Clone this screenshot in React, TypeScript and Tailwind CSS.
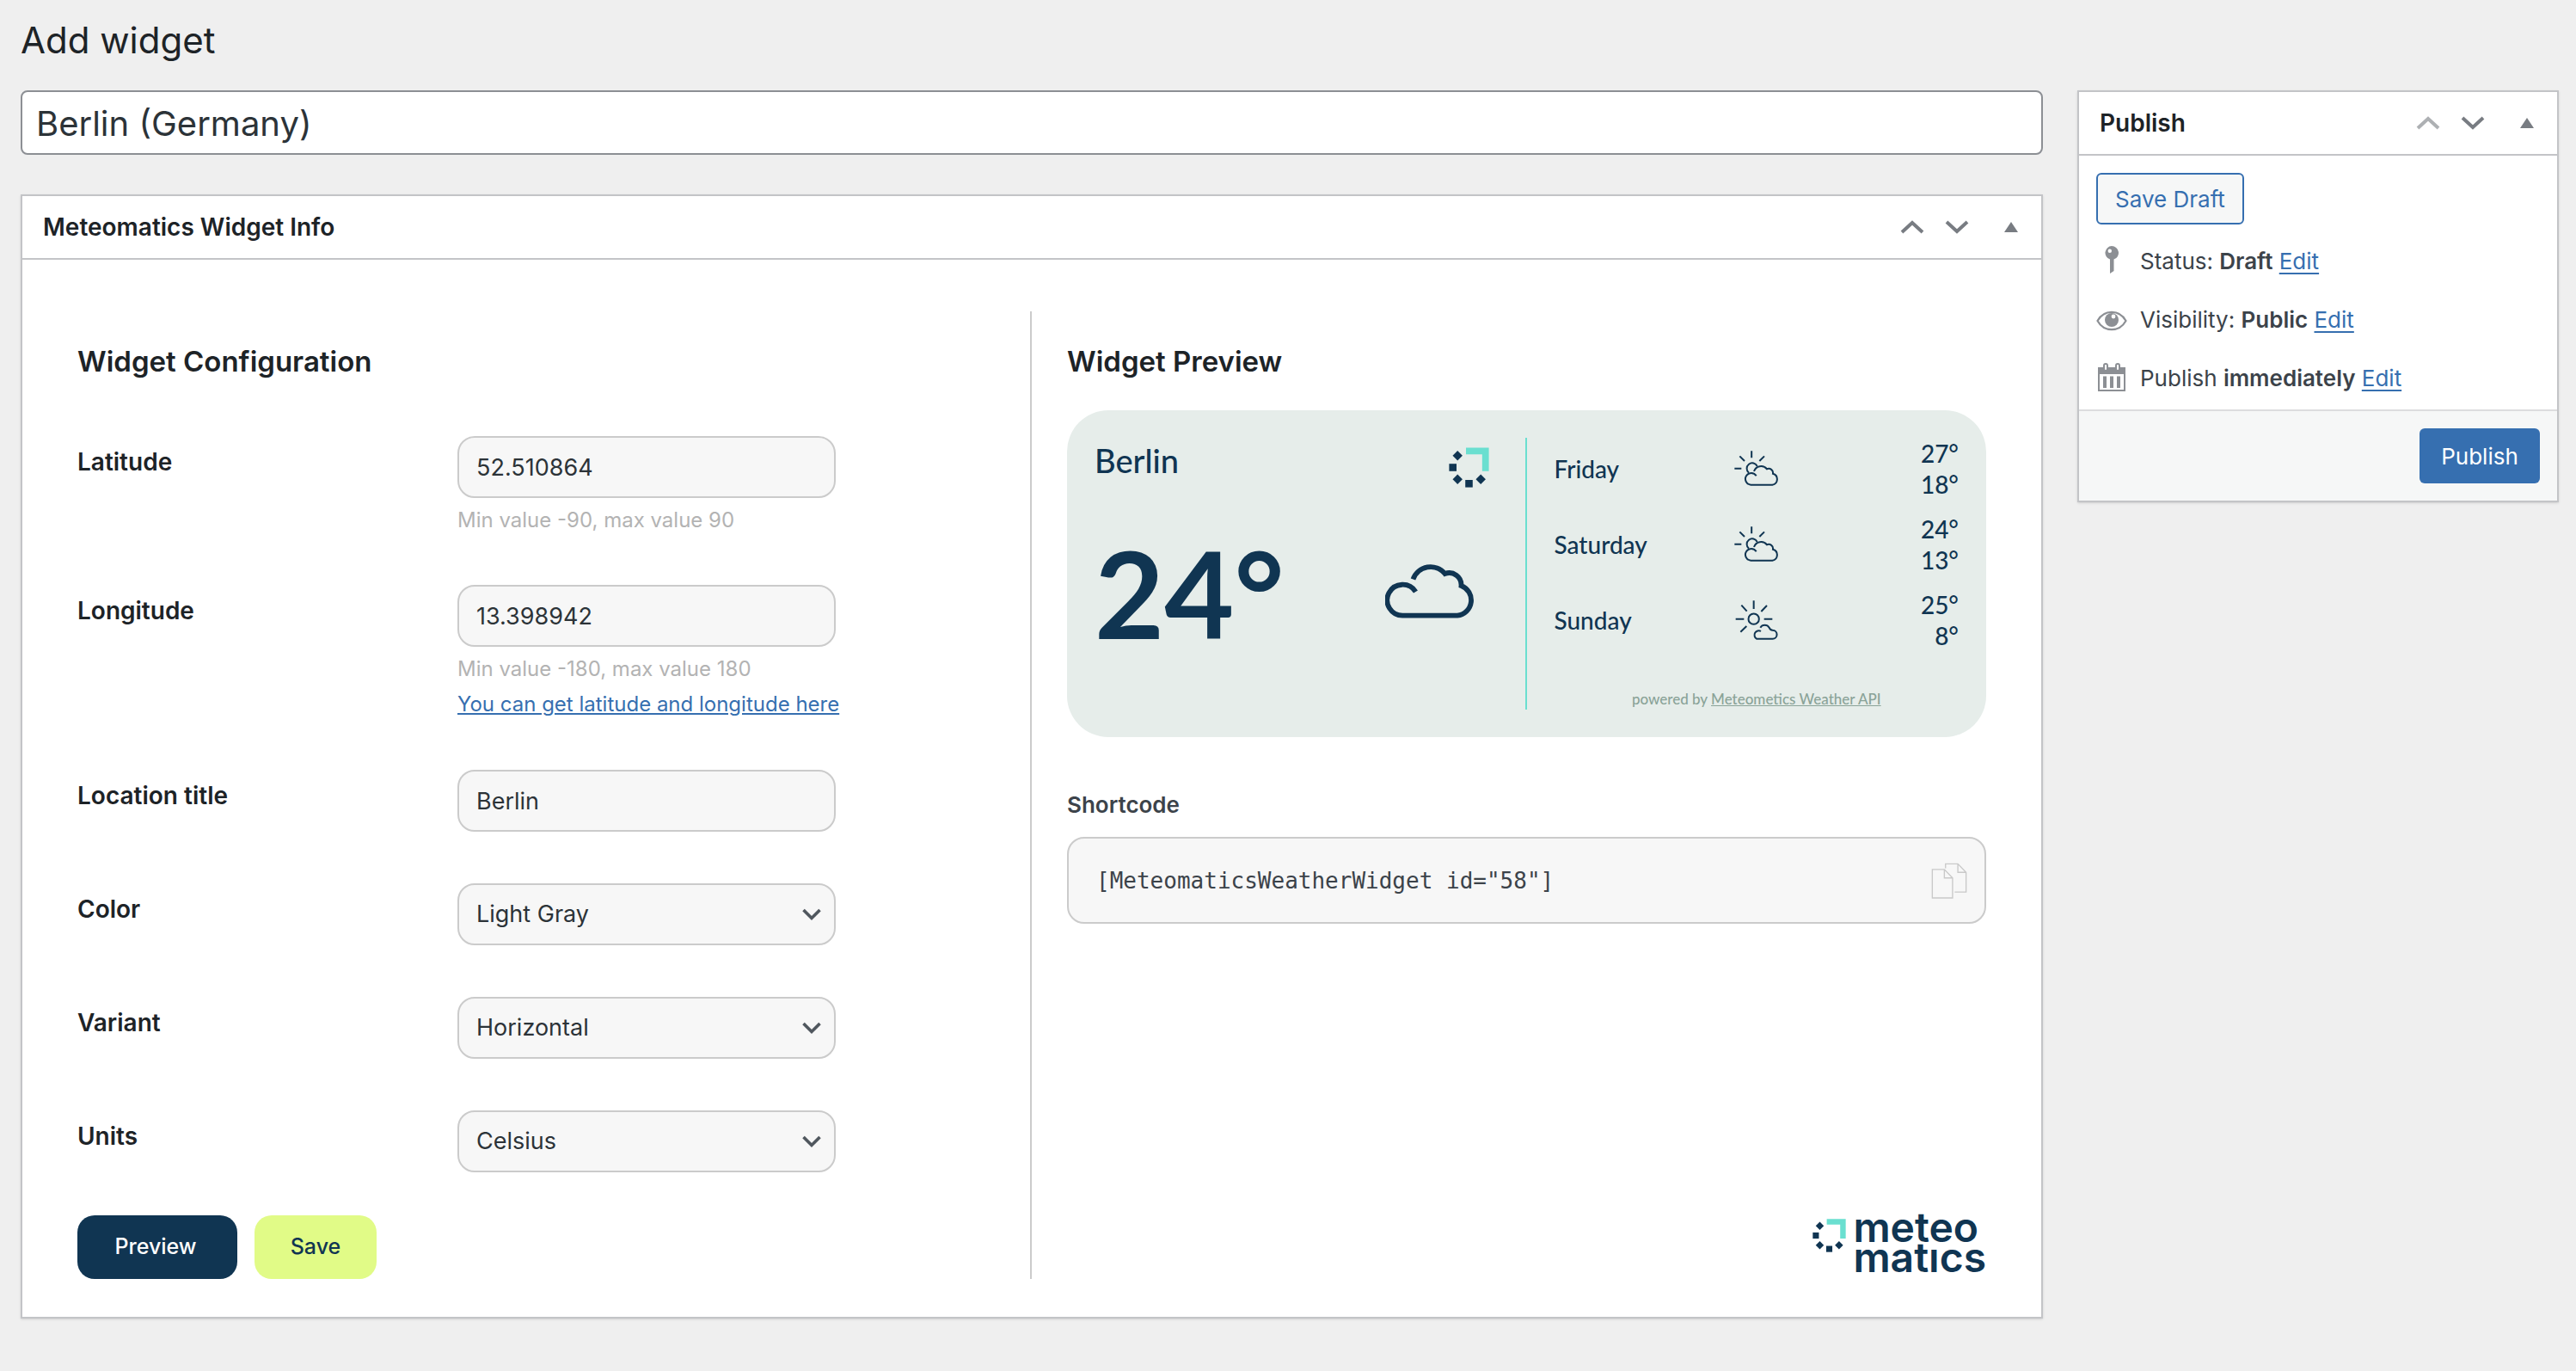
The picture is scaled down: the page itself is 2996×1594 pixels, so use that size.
import React, { useState } from "react";

function MoveUpIcon() {
  return (
    <svg width="28" height="16" viewBox="0 0 28 16" aria-hidden="true">
      <path d="M2 14 L14 3 L26 14" fill="none" stroke="currentColor" strokeWidth="4" />
    </svg>
  );
}

function MoveDownIcon() {
  return (
    <svg width="28" height="16" viewBox="0 0 28 16" aria-hidden="true">
      <path d="M2 2 L14 13 L26 2" fill="none" stroke="currentColor" strokeWidth="4" />
    </svg>
  );
}

function ToggleIcon() {
  return (
    <svg width="16" height="12" viewBox="0 0 16 12" aria-hidden="true">
      <path d="M8 0 L16 12 H0 Z" fill="currentColor" />
    </svg>
  );
}

function PanelHeader({ title, isFirst = false }: { title: string; isFirst?: boolean }) {
  return (
    <header className="flex h-[74px] items-center border-b-2 border-[#c3c4c7] pr-[27px] pl-6 text-[#787c82]">
      <h2 className="mr-auto text-[28px] leading-9 font-semibold text-[#1d2327]">{title}</h2>
      <button type="button" aria-label="Move up" className={isFirst ? "opacity-60" : ""}>
        <MoveUpIcon />
      </button>
      <button type="button" aria-label="Move down" className="ml-6">
        <MoveDownIcon />
      </button>
      <button type="button" aria-label="Toggle panel" className="ml-[41px]">
        <ToggleIcon />
      </button>
    </header>
  );
}

function MeteomaticsMark({ className }: { className: string }) {
  return (
    <svg viewBox="179 109 115 115" className={className} aria-hidden="true">
      <path d="M228 110 H293 V177 H274 V129 H228 Z" fill="#6adfd0" />
      <g fill="#103552">
        <path d="M204 119 L218 133 L204 147 L190 133 Z" />
        <path d="M204 186 L218 200 L204 214 L190 200 Z" />
        <path d="M270 186 L284 200 L270 214 L256 200 Z" />
        <rect x="180" y="156" width="21" height="21" />
        <rect x="226" y="202" width="21" height="21" />
      </g>
    </svg>
  );
}

function CloudIcon() {
  return (
    <svg width="105" height="64" viewBox="380 196 105 64" className="mr-[58px] mb-1" role="img" aria-label="Cloudy">
      <path
        d="M412.5 214.5 A21.5 21.5 0 0 1 449.5 208 A14 14 0 0 1 468.5 222 A18 18 0 0 1 464 256.7 H401 A18 18 0 1 1 415.5 229"
        fill="none"
        stroke="#103552"
        strokeWidth="5.8"
      />
    </svg>
  );
}

function PartlyCloudyIcon() {
  return (
    <svg width="52" height="42" viewBox="50 44 156 126" role="img" aria-label="Partly cloudy">
      <g fill="none" stroke="#103552" strokeWidth="6">
        <path d="M110.500 45 V69 M51 106 H75 M69 63 L86 80 M155 63 L138 80" />
        <path d="M101 121 A19 19 0 1 1 130 98" />
        <path d="M119 116 A26 26 0 0 1 164 108 A15 15 0 0 1 185 124 A20 20 0 0 1 183 163 H108 A20.500 20.500 0 1 1 127 132" />
      </g>
    </svg>
  );
}

function MostlySunnyIcon() {
  return (
    <svg width="52" height="46" viewBox="52 26 156 138" role="img" aria-label="Mostly sunny">
      <g fill="none" stroke="#103552" strokeWidth="6">
        <circle cx="120" cy="91" r="18.500" />
        <path d="M120 27 V56 M57 91 H86 M156 91 H185 M77 43 L96 64 M166 44 L146 65 M95 116 L74 136" />
        <path d="M143 121 A18 18 0 0 1 174 121 Q177 130 186 130.500 A14.500 14.500 0 0 1 186 160 H130 A14.500 14.500 0 1 1 145 134" />
      </g>
    </svg>
  );
}

function CopyIcon() {
  return (
    <svg width="42" height="42" viewBox="143 130 123 123" aria-hidden="true">
      <g fill="none" stroke="#c9c9c9" strokeWidth="4">
        <path d="M147 153 H188 L216 182 V250 H147 Z M188 153 V182 H216" />
        <path d="M192 149 V134 H234 L262 163 V230 H223 M234 134 V163 H262" />
      </g>
    </svg>
  );
}

function KeyIcon() {
  return (
    <svg width="36" height="34" viewBox="0 0 36 34" aria-hidden="true">
      <path
        fillRule="evenodd"
        fill="#8c8f94"
        d="M18 0 A8 8 0 0 1 20.500 15.600 V29 L16 32 V15.600 A8 8 0 0 1 18 0 Z M15.800 3.500 A2.200 2.200 0 1 0 15.800 7.900 A2.200 2.200 0 1 0 15.800 3.500 Z"
      />
    </svg>
  );
}

function EyeIcon() {
  return (
    <svg width="36" height="24" viewBox="0 0 36 24" className="mt-1" aria-hidden="true">
      <path d="M1.500 12 Q8 2 18 2 T34.500 12 Q28 22.500 18 22.500 T1.500 12 Z" fill="none" />
      <path
        d="M1.500 12 C9 -1.500 27 -1.500 34.500 12 C27 25.500 9 25.500 1.500 12 Z"
        fill="none"
        stroke="#8c8f94"
        strokeWidth="2.200"
      />
      <circle cx="18" cy="11" r="8" fill="#8c8f94" />
      <circle cx="20" cy="7" r="2.400" fill="#fff" />
    </svg>
  );
}

function CalendarIcon() {
  return (
    <svg width="36" height="34" viewBox="0 0 36 34" aria-hidden="true">
      <path d="M2 5 H34 V13 H2 Z" fill="#8c8f94" />
      <path d="M3 6 V32 H33 V6" fill="none" stroke="#8c8f94" strokeWidth="2" />
      <path d="M8 15.500 H12 V29 H8 Z M16 15.500 H20 V29 H16 Z M24 15.500 H28 V29 H24 Z" fill="#8c8f94" />
      <rect x="9" y="1" width="4" height="8" rx="2" fill="#fff" stroke="#8c8f94" strokeWidth="2" />
      <rect x="23" y="1" width="4" height="8" rx="2" fill="#fff" stroke="#8c8f94" strokeWidth="2" />
    </svg>
  );
}

function FieldRow({ id, label, children }: { id: string; label: string; children: React.ReactNode }) {
  return (
    <div className="grid min-h-[77px] grid-cols-[442px_440px]">
      <label htmlFor={id} className="text-[28px] leading-[60px] font-semibold text-[#1d2327]">
        {label}
      </label>
      <div>{children}</div>
    </div>
  );
}

function TextField({ id, value }: { id: string; value: string }) {
  const [text, setText] = useState(value);
  return (
    <input
      id={id}
      value={text}
      onChange={(e) => setText(e.target.value)}
      className="mb-[5px] block h-[72px] w-full rounded-[20px] border-2 border-[#cbcbcb] bg-[#f7f7f7] px-5 text-[27px] text-[#2c3338]"
    />
  );
}

function SelectField({ id, options }: { id: string; options: string[] }) {
  return (
    <div className="relative">
      <select
        id={id}
        className="block h-[72px] w-full appearance-none rounded-[20px] border-2 border-[#cbcbcb] bg-[#f7f7f7] px-5 text-[27px] text-[#2c3338]"
      >
        {options.map((option) => (
          <option key={option}>{option}</option>
        ))}
      </select>
      <svg
        width="24"
        height="16"
        viewBox="0 0 24 16"
        className="pointer-events-none absolute top-7 right-4"
        aria-hidden="true"
      >
        <path d="M2.500 3 L12 12.500 L21.500 3" fill="none" stroke="#50575e" strokeWidth="3.600" />
      </svg>
    </div>
  );
}

const forecast = [
  { day: "Friday", icon: <PartlyCloudyIcon />, high: "27°", low: "18°" },
  { day: "Saturday", icon: <PartlyCloudyIcon />, high: "24°", low: "13°" },
  { day: "Sunday", icon: <MostlySunnyIcon />, high: "25°", low: "8°" },
];

function WeatherCard() {
  return (
    <div className="mt-[37px] grid grid-cols-2 rounded-[48px] bg-[#e6edea] py-8 font-['Lato',sans-serif] text-[#103552]">
      <div className="border-r-2 border-[#6adfd0] pl-8">
        <div className="flex justify-between pr-[42px]">
          <p className="mt-0.5 text-[38px] leading-12 font-medium">Berlin</p>
          <MeteomaticsMark className="mt-[11px] size-[47px]" />
        </div>
        <div className="mt-14 flex items-center justify-between">
          <p className="text-[140px] leading-[132px] font-bold">24°</p>
          <CloudIcon />
        </div>
      </div>
      <div className="pr-8 pl-8 font-medium">
        <ul className="flex flex-col gap-4">
          {forecast.map((item) => (
            <li key={item.day} className="grid grid-cols-[209px_1fr_auto] items-center text-[28px] leading-9">
              <span>{item.day}</span>
              <span>{item.icon}</span>
              <span className="flex flex-col text-right">
                <span>{item.high}</span>
                <span>{item.low}</span>
              </span>
            </li>
          ))}
        </ul>
        <p className="mt-[44px] text-center text-[17px] leading-6 text-[#8aa398]">
          powered by{" "}
          <a href="#api" className="underline">
            Meteometics Weather API
          </a>
        </p>
      </div>
    </div>
  );
}

function StatusRow({ icon, label, value }: { icon: React.ReactNode; label: string; value: string }) {
  return (
    <li className="flex h-[68px] items-center gap-[15px]">
      {icon}
      <span>
        {label} <b className="font-semibold">{value}</b>{" "}
        <a href="#edit" className="text-[#366fb0] underline underline-offset-4">
          Edit
        </a>
      </span>
    </li>
  );
}

export default function App() {
  const [title, setTitle] = useState("Berlin (Germany)");
  return (
    <div className="min-h-screen bg-[#efefef] pt-6 pr-5 pb-[60px] pl-6 font-['Inter',sans-serif] text-[#3c434a]">
      <h1 className="text-[42px] leading-[46px] text-[#1d2327]">Add widget</h1>
      <div className="mt-[35px] flex items-start gap-10">
        <main className="min-w-0 flex-1">
          <input
            aria-label="Title"
            value={title}
            onChange={(e) => setTitle(e.target.value)}
            className="block h-[75px] w-full rounded-lg border-2 border-[#8c8f94] bg-white px-4 pt-0.5 text-[40px] text-[#2c3338]"
          />
          <section className="mt-[46px] border-2 border-[#c3c4c7] bg-white shadow-sm">
            <PanelHeader title="Meteomatics Widget Info" />
            <div className="grid grid-cols-2 px-16 pt-[60px] pb-11">
              <form className="border-r-2 border-[#cbcbcb] pt-[38px]" onSubmit={(e) => e.preventDefault()}>
                <h3 className="text-[33px] leading-10 font-semibold text-[#1d2327]">Widget Configuration</h3>
                <div className="mt-[67px] flex flex-col gap-[55px]">
                  <FieldRow id="latitude" label="Latitude">
                    <TextField id="latitude" value="52.510864" />
                    <p className="text-2xl leading-[41px] text-[#b3b3b3]">Min value -90, max value 90</p>
                  </FieldRow>
                  <FieldRow id="longitude" label="Longitude">
                    <TextField id="longitude" value="13.398942" />
                    <p className="text-2xl leading-[41px] text-[#b3b3b3]">Min value -180, max value 180</p>
                    <a
                      href="#coordinates"
                      className="block text-2xl leading-[42px] whitespace-nowrap text-[#366fb0] underline"
                    >
                      You can get latitude and longitude here
                    </a>
                  </FieldRow>
                  <FieldRow id="location" label="Location title">
                    <TextField id="location" value="Berlin" />
                  </FieldRow>
                  <FieldRow id="color" label="Color">
                    <SelectField id="color" options={["Light Gray"]} />
                  </FieldRow>
                  <FieldRow id="variant" label="Variant">
                    <SelectField id="variant" options={["Horizontal"]} />
                  </FieldRow>
                  <FieldRow id="units" label="Units">
                    <SelectField id="units" options={["Celsius"]} />
                  </FieldRow>
                </div>
                <div className="mt-[45px] flex gap-5 text-[25px] font-medium">
                  <button type="button" className="h-[74px] w-[186px] rounded-[20px] bg-[#103552] pr-1 text-white">
                    Preview
                  </button>
                  <button type="submit" className="h-[74px] w-[142px] rounded-[20px] bg-[#e1fb87] text-[#103552]">
                    Save
                  </button>
                </div>
              </form>
              <div className="flex flex-col pt-[38px] pl-[41px]">
                <h3 className="text-[33px] leading-10 font-semibold text-[#1d2327]">Widget Preview</h3>
                <WeatherCard />
                <p className="mt-[63px] text-[26px] leading-8 font-semibold">Shortcode</p>
                <div className="mt-[21px] flex h-[101px] items-center justify-between rounded-[20px] border-2 border-[#cbcbcb] bg-[#f7f7f7] pr-5 pl-8">
                  <code className="font-['DejaVu_Sans_Mono',monospace] text-[26px] leading-8">
                    [MeteomaticsWeatherWidget id="58"]
                  </code>
                  <button type="button" aria-label="Copy shortcode">
                    <CopyIcon />
                  </button>
                </div>
                <div className="mt-auto flex justify-end gap-2 pb-2" role="img" aria-label="meteomatics">
                  <MeteomaticsMark className="mt-2 size-[39px]" />
                  <p className="text-[48px] leading-[35px] font-semibold text-[#103552]">
                    meteo
                    <br />
                    matıcs
                  </p>
                </div>
              </div>
            </div>
          </section>
        </main>
        <aside className="w-[560px] shrink-0 border-2 border-[#c3c4c7] bg-white text-[26px] shadow-sm">
          <PanelHeader title="Publish" isFirst />
          <div className="px-5 pt-5 pb-[3px]">
            <button
              type="button"
              className="h-[60px] rounded-md border-2 border-[#366fb0] bg-[#f6f7f7] px-5 text-[#366fb0]"
            >
              Save Draft
            </button>
            <ul className="mt-2">
              <StatusRow icon={<KeyIcon />} label="Status:" value="Draft" />
              <StatusRow icon={<EyeIcon />} label="Visibility:" value="Public" />
              <StatusRow icon={<CalendarIcon />} label="Publish" value="immediately" />
            </ul>
          </div>
          <div className="flex justify-end border-t-2 border-[#dcdcde] bg-[#f6f7f7] p-5">
            <button type="button" className="h-16 w-[140px] rounded-md bg-[#366fb0] text-white">
              Publish
            </button>
          </div>
        </aside>
      </div>
    </div>
  );
}
